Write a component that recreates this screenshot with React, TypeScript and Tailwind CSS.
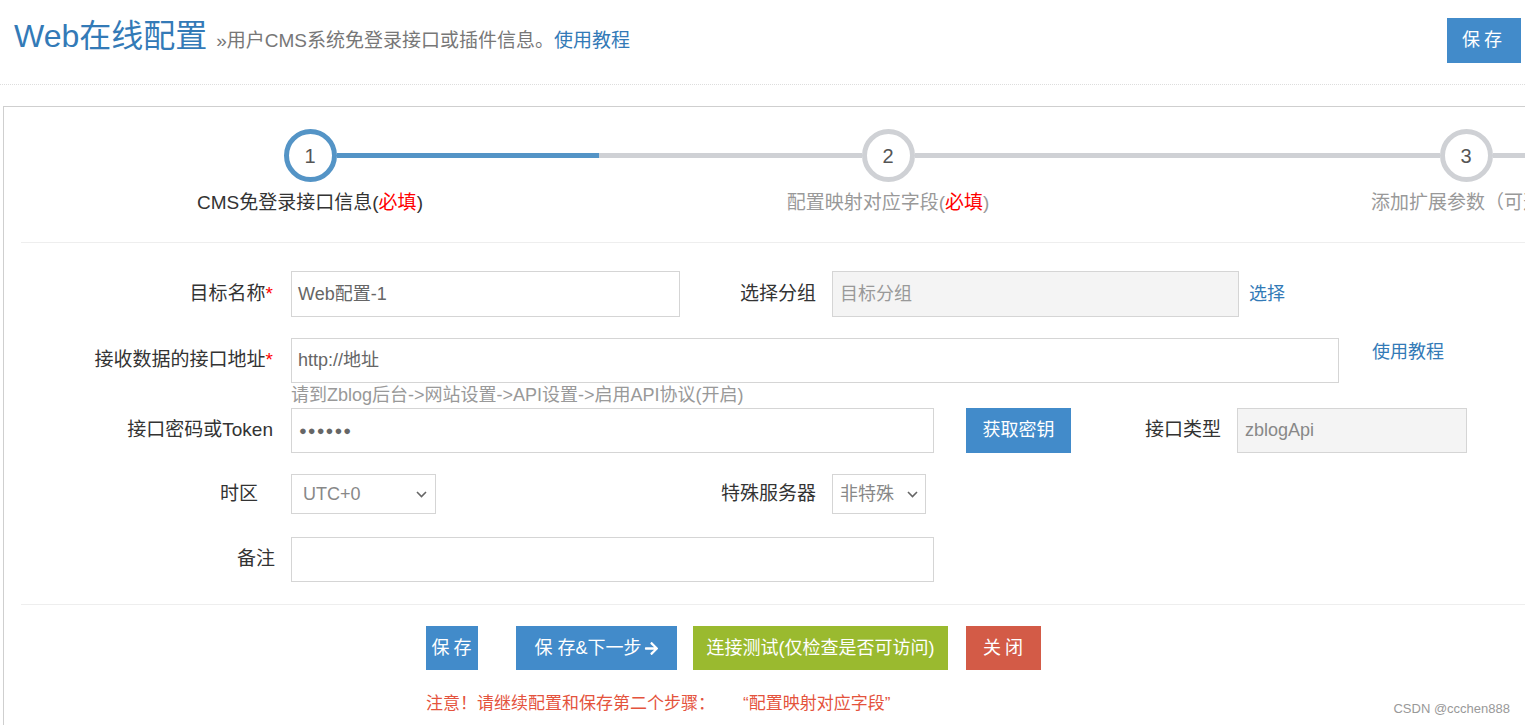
import React from "react";
import { FaArrowRight } from "react-icons/fa";

function Chevron() {
  return (
    <svg width="11" height="7" viewBox="0 0 11 7" className="shrink-0">
      <path d="M1 1 L5.5 5.5 L10 1" fill="none" stroke="#666" strokeWidth="1.6" />
    </svg>
  );
}

function Step({ n, active, leftColor, rightColor, children, labelColor }: { n: number; active: boolean; leftColor: string; rightColor: string; children: React.ReactNode; labelColor: string }) {
  return (
    <div className="w-[578px] shrink-0 flex flex-col items-center">
      <div className="w-full flex items-center">
        <div className={`flex-1 h-[5px] ${leftColor}`} />
        <div
          className={`w-[53px] h-[53px] rounded-full border-[5px] flex items-center justify-center text-[20px] text-[#555] bg-white ${
            active ? "border-[#5494c6]" : "border-[#cfd1d5]"
          }`}
        >
          {n}
        </div>
        <div className={`flex-1 h-[5px] ${rightColor}`} />
      </div>
      <div className={`mt-[8px] text-[19px] leading-[25px] whitespace-nowrap ${labelColor}`}>{children}</div>
    </div>
  );
}

export default function App() {
  return (
    <div className="relative w-[1525px] h-[725px] overflow-hidden bg-white font-['Liberation_Sans','Noto_Sans_CJK_SC',sans-serif] text-[#333]">
      {/* Header */}
      <div className="h-[85px] border-b border-dotted border-[#ddd] flex items-start justify-between">
        <div className="pl-[14px] pt-[15px] flex items-baseline whitespace-nowrap">
          <span className="text-[32px] leading-[42px] text-[#337ab7]">Web在线配置</span>
          <span className="ml-[9px] text-[19px] text-[#777]">»用户CMS系统免登录接口或插件信息。</span>
          <span className="text-[19px] text-[#337ab7]">使用教程</span>
        </div>
        <button className="mt-[18px] mr-[4px] w-[74px] h-[45px] bg-[#428bca] text-white text-[18px] tracking-[4px]">保存</button>
      </div>

      {/* Panel */}
      <div className="mt-[21px] ml-[3px] w-[1800px] border border-[#cfcfcf] pl-[17px] pt-[22px] pb-[40px]">
        <div className="flex">
          <Step n={1} active leftColor="bg-transparent" rightColor="bg-[#5494c6]" labelColor="text-[#333]">
            CMS免登录接口信息(<span className="text-[#f00]">必填</span>)
          </Step>
          <Step n={2} active={false} leftColor="bg-[#cfd1d5]" rightColor="bg-[#cfd1d5]" labelColor="text-[#999]">
            配置映射对应字段(<span className="text-[#f00]">必填</span>)
          </Step>
          <Step n={3} active={false} leftColor="bg-[#cfd1d5]" rightColor="bg-[#cfd1d5]" labelColor="text-[#999]">
            添加扩展参数（可选）
          </Step>
        </div>

        <div className="mt-[27px] border-t border-[#eee]" />

        {/* Form */}
        <div className="pt-[28px] text-[19px]">
          {/* Row 1 */}
          <div className="flex items-center h-[46px]">
            <div className="w-[270px] pr-[18px] text-right">
              目标名称<span className="text-[#f00]">*</span>
            </div>
            <div className="w-[389px] h-[46px] border border-[#d5d5d5] px-[6px] flex items-center text-[#666] text-[18px]">Web配置-1</div>
            <div className="w-[152px] pr-[16px] text-right">选择分组</div>
            <div className="w-[407px] h-[46px] border border-[#d5d5d5] bg-[#f4f4f4] px-[7px] flex items-center text-[#999] text-[18px]">目标分组</div>
            <span className="ml-[10px] text-[#337ab7] text-[18px]">选择</span>
          </div>

          {/* Row 2 */}
          <div className="mt-[21px] flex items-start">
            <div className="w-[270px] pr-[18px] text-right h-[45px] flex items-center justify-end">
              接收数据的接口地址<span className="text-[#f00]">*</span>
            </div>
            <div className="w-[1048px] h-[45px] border border-[#d5d5d5] px-[6px] flex items-center text-[#666] text-[18px]">http://地址</div>
            <span className="ml-[33px] mt-[1px] text-[#337ab7] text-[18px]">使用教程</span>
          </div>
          <div className="ml-[270px] leading-[25px] text-[#999] text-[18px]">请到Zblog后台-&gt;网站设置-&gt;API设置-&gt;启用API协议(开启)</div>

          {/* Row 3 */}
          <div className="flex items-center h-[45px]">
            <div className="w-[270px] pr-[18px] text-right">接口密码或Token</div>
            <div className="w-[643px] h-[45px] border border-[#d5d5d5] px-[7px] flex items-center text-[#666] text-[13px] tracking-[1px]">●●●●●●</div>
            <button className="ml-[32px] w-[105px] h-[45px] bg-[#428bca] text-white text-[18px]">获取密钥</button>
            <div className="w-[166px] pr-[16px] text-right">接口类型</div>
            <div className="w-[230px] h-[45px] border border-[#d5d5d5] bg-[#f4f4f4] px-[7px] flex items-center text-[#888] text-[18px]">zblogApi</div>
          </div>

          {/* Row 4 */}
          <div className="mt-[21px] flex items-center h-[40px]">
            <div className="w-[270px] pr-[33px] text-right">时区</div>
            <div className="w-[145px] h-[40px] border border-[#d5d5d5] pl-[11px] pr-[8px] flex items-center justify-between text-[#888] text-[18px]">
              <span>UTC+0</span>
              <Chevron />
            </div>
            <div className="w-[396px] pr-[16px] text-right">特殊服务器</div>
            <div className="w-[94px] h-[40px] border border-[#d5d5d5] pl-[7px] pr-[7px] flex items-center justify-between text-[#888] text-[18px]">
              <span>非特殊</span>
              <Chevron />
            </div>
          </div>

          {/* Row 5 */}
          <div className="mt-[23px] flex items-center h-[45px]">
            <div className="w-[270px] pr-[16px] text-right">备注</div>
            <div className="w-[643px] h-[45px] border border-[#d5d5d5]" />
          </div>
        </div>

        <div className="mt-[22px] border-t border-[#eee]" />

        {/* Buttons */}
        <div className="mt-[21px] ml-[405px] flex items-center text-[18px] text-white">
          <button className="w-[52px] h-[44px] bg-[#428bca] tracking-[4px] pl-[3px]">保存</button>
          <button className="ml-[38px] w-[161px] h-[44px] bg-[#428bca] flex items-center justify-center">
            <span>保 存&amp;下一步</span>
            <FaArrowRight className="ml-[2px] w-[15px] h-[15px]" />
          </button>
          <button className="ml-[16px] w-[255px] h-[44px] bg-[#9aba2f]">连接测试(仅检查是否可访问)</button>
          <button className="ml-[18px] w-[75px] h-[44px] bg-[#d35b47] tracking-[4px] pl-[3px]">关闭</button>
        </div>

        <div className="mt-[22px] ml-[405px] leading-[24px] text-[17px] text-[#e4533d] whitespace-nowrap">
          注意！请继续配置和保存第二个步骤：<span className="ml-[28px]">“配置映射对应字段”</span>
        </div>
      </div>

      <div className="absolute right-[15px] bottom-[7px] text-[13px] text-[#999]">CSDN @ccchen888</div>
    </div>
  );
}
